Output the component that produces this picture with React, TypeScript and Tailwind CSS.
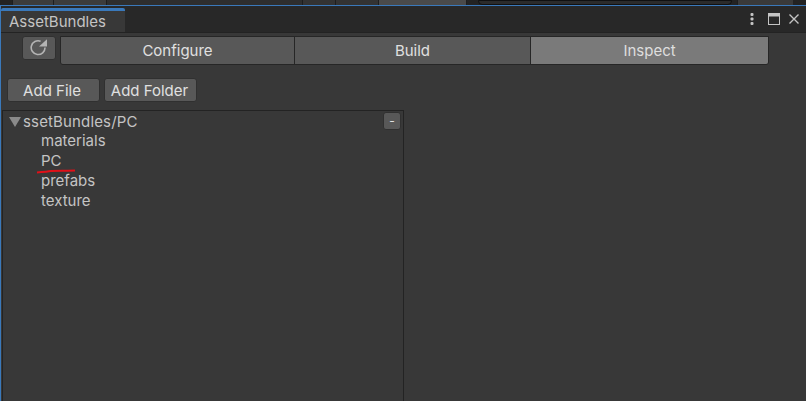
const tabs = ['Configure', 'Build', 'Inspect'];
const folders = ['materials', 'PC', 'prefabs', 'texture'];

function RefreshIcon() {
  return (
    <svg className="mb-[3px] mr-[1px]" width="18" height="18" viewBox="0 0 18 18" fill="none" stroke="#b4b4b4" strokeWidth="1.6">
      <path d="M10.6 3.2A6.9 6.9 0 1 0 15 9.6" />
      <path d="M9 8.4h8V1.2z" fill="#b4b4b4" stroke="none" />
    </svg>
  );
}

function TopStrip() {
  return (
    <div className="flex h-[5px] overflow-hidden bg-[#232323]">
      <div className="ml-[12px] w-[42px] border-x border-[#1e1e1e] bg-[#3c3c3c]" />
      <div className="w-[53px] border-r border-[#1e1e1e] bg-[#3c3c3c]" />
      <div className="w-[196px] border-r border-[#1e1e1e] bg-[#2e2e2e]" />
      <div className="w-[33px] border-r border-[#1e1e1e] bg-[#333333]" />
      <div className="w-[43px] border-r border-[#1e1e1e] bg-[#333333]" />
      <div className="w-[88px] border-r border-[#1e1e1e] bg-[#4a4a4a]" />
      <div className="ml-[11px] w-[254px] rounded-b border border-[#111] bg-[#2b2b2b]" />
      <div className="ml-[5px] w-[56px] border-l border-[#1e1e1e] bg-[#3a3a3a]" />
    </div>
  );
}

function TitleBar() {
  return (
    <div className="flex h-[27px] items-end border-b border-[#232323] bg-[#282828]">
      <div className="h-[24px] w-[124px] rounded-t-[2px] border-t-[3px] border-[#3a79bb] bg-[#383838] pl-[8px] text-[15px] leading-[21px] text-[#c4c4c4]">
        AssetBundles
      </div>
      <div className="ml-auto flex h-[26px] items-center pr-[7px]">
        <svg width="4" height="12" viewBox="0 0 4 12" fill="#c4c4c4">
          <rect x="0.5" y="0" width="3" height="3" rx="1" />
          <rect x="0.5" y="4.5" width="3" height="3" rx="1" />
          <rect x="0.5" y="9" width="3" height="3" rx="1" />
        </svg>
        <svg className="ml-[14px]" width="12" height="12" viewBox="0 0 12 12" fill="none" stroke="#c4c4c4">
          <rect x="0.5" y="0.5" width="11" height="11" />
          <rect x="0.5" y="0.5" width="11" height="2.5" fill="#c4c4c4" />
        </svg>
        <svg className="ml-[9px]" width="10" height="10" viewBox="0 0 10 10" fill="none" stroke="#c4c4c4" strokeWidth="1.4">
          <path d="M0.5 0.5l9 9M9.5 0.5l-9 9" />
        </svg>
      </div>
    </div>
  );
}

export default function App() {
  return (
    <div className="h-[401px] w-[806px] overflow-hidden bg-[#383838] font-['Inter','Roboto',sans-serif] text-[15px] text-[#c4c4c4]">
      <TopStrip />
      <div className="border-l border-t border-[#3a79bb]">
        <TitleBar />
        <div className="flex items-start pl-[21px] pt-[3px]">
          <button className="flex h-[24px] w-[34px] items-center justify-center rounded-[3px] border border-[#303030] bg-[#585858]">
            <RefreshIcon />
          </button>
          <div className="ml-[4px] flex h-[29px] w-[709px] overflow-hidden rounded-b-[3px] border border-[#262626]">
            {tabs.map((tab, i) => (
              <div
                key={tab}
                className={
                  tab === 'Inspect'
                    ? 'flex flex-1 items-center justify-center border-l border-[#262626] bg-[#7a7a7a] pt-[1px] text-[#dedede]'
                    : i === 1
                      ? 'flex w-[236px] items-center justify-center border-l border-[#262626] bg-[#585858] pt-[1px] text-[#e0e0e0]'
                      : 'flex w-[233px] items-center justify-center bg-[#585858] pt-[1px] text-[#e0e0e0]'
                }
              >
                {tab}
              </div>
            ))}
          </div>
        </div>
        <div className="flex gap-[4px] pl-[6px] pt-[13px]">
          <button className="h-[24px] w-[93px] rounded-[3px] border border-[#303030] bg-[#585858] pr-[3px] pt-[1px] text-[#e0e0e0]">Add File</button>
          <button className="h-[24px] w-[93px] rounded-[3px] border border-[#303030] bg-[#585858] pr-[2px] pt-[1px] text-[#e0e0e0]">Add Folder</button>
        </div>
        <div className="relative ml-[1px] mt-[8px] h-[300px] w-[402px] border-x border-t border-[#232323]">
          <div className="mt-[1px] flex h-[20px] items-center pl-[6px]">
            <svg width="12" height="10" viewBox="0 0 12 10" fill="#8a8a8a">
              <path d="M0 0h12L6 10z" />
            </svg>
            <span className="ml-[2px] tracking-[0.15px]">ssetBundles/PC</span>
            <button className="absolute right-[2px] top-[1px] flex h-[18px] w-[18px] items-center justify-center rounded-[3px] border border-[#303030] bg-[#585858] text-[12px] text-[#e0e0e0]">-</button>
          </div>
          <div className="pl-[38px]">
            {folders.map((name) => (
              <div key={name} className="relative h-[20px] leading-[18px]">
                {name}
                {name === 'PC' && (
                  <svg className="absolute left-[-5px] top-[16px]" width="42" height="6" viewBox="0 0 42 6" fill="none" stroke="#e01018" strokeWidth="2">
                    <path d="M1 4.5C6 4 10 4 13 3.2C18 2.4 30 3 39 2.6" />
                  </svg>
                )}
              </div>
            ))}
          </div>
        </div>
      </div>
    </div>
  );
}
